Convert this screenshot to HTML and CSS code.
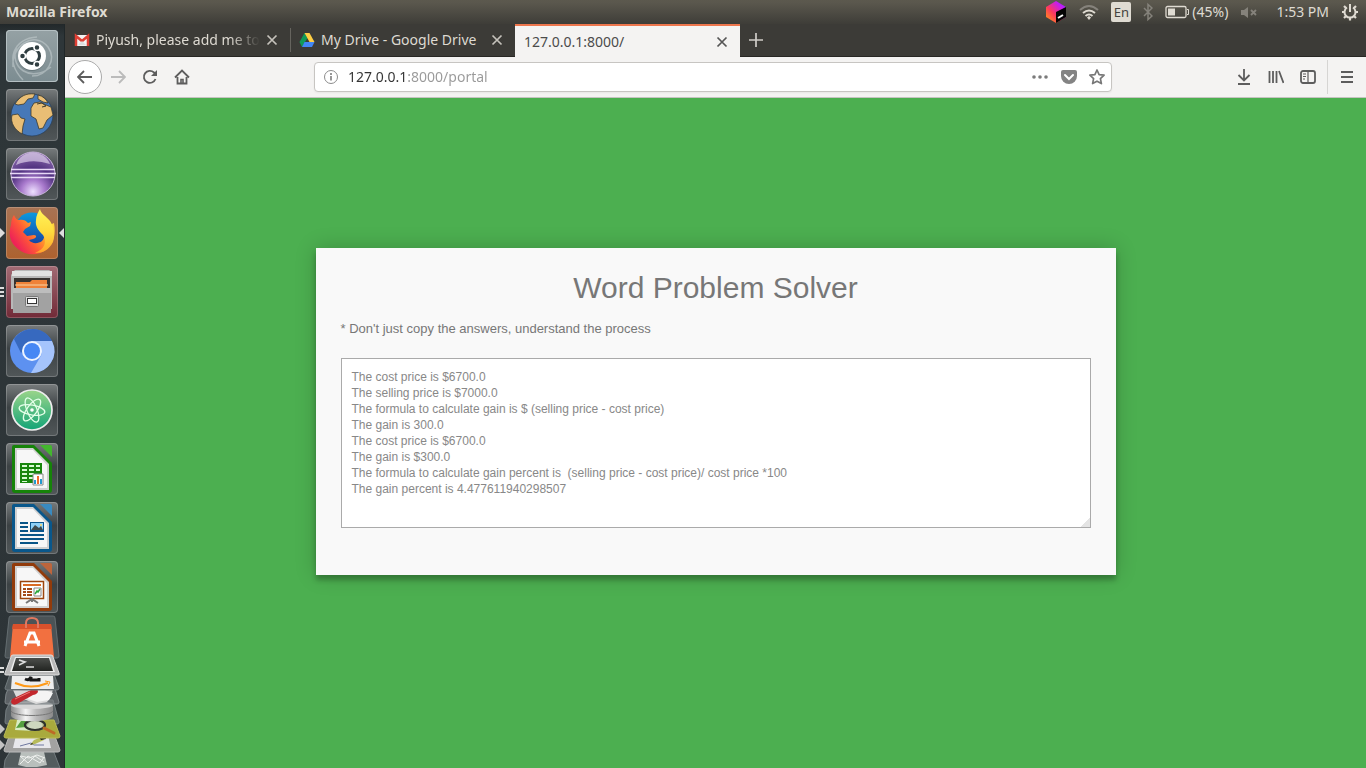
FILE: index.html
```html
<!DOCTYPE html>
<html lang="en">
<head>
<meta charset="utf-8">
<title>127.0.0.1:8000/</title>
<link rel="stylesheet" href="styles.css">
</head>
<body>
<header class="panel">
  <span class="panel-title">Mozilla Firefox</span>
  <div class="indicators">
    <svg width="22" height="24" viewBox="0 0 22 24"><defs><linearGradient id="cube" x1="0" y1="1" x2="1" y2="0"><stop offset=".1" stop-color="#ff8a20"/><stop offset=".4" stop-color="#fd3a5c"/><stop offset=".75" stop-color="#c41cf5"/><stop offset="1" stop-color="#7b30ff"/></linearGradient></defs><path d="M11 1 1 7v10l10 6 10-6V7z" fill="url(#cube)"/><path d="m11 12 10-5v10l-10 6z" fill="#050505"/><path d="m13 18 5-3" stroke="#fff" stroke-width="2"/></svg>
    <svg width="20" height="24" viewBox="0 0 20 24" fill="none" stroke-width="2"><path d="M1 10q9-8 18 0" stroke="#85827b"/><path d="M4 13q6-5 12 0M6.500 16q3.500-3 7 0" stroke="#dfdbd2"/><path d="m10 16-2 1.500 2 2.500 2-2.500z" fill="#dfdbd2"/></svg>
    <span class="lang">En</span>
    <svg width="10" height="24" viewBox="0 0 10 24" fill="none" stroke="#85827b" stroke-width="1.500"><path d="m1 8 8 8-4 3.500v-15L9 8l-8 8"/></svg>
    <span class="battery"><svg width="25" height="24" viewBox="0 0 25 24"><rect x="1" y="6.500" width="20" height="11" rx="1.500" fill="none" stroke="#dfdbd2" stroke-width="1.300"/><path d="M3 8.500h7v7H3z" fill="#dfdbd2"/><path d="M22 9.500h1.500v5H22" fill="none" stroke="#dfdbd2"/></svg>(45%)</span>
    <svg width="18" height="24" viewBox="0 0 18 24"><path d="M1 10h3l4-3v11l-4-3H1z" fill="#85827b"/><path d="m11 10 5 5m0-5-5 5" stroke="#85827b" stroke-width="1.800"/></svg>
    <time class="clock">1:53 PM</time>
    <svg width="18" height="24" viewBox="0 0 18 24" fill="none" stroke="#dfdbd2"><path d="M6 7.500a5.500 5.500 0 1 0 6 0M9 4v8" stroke-width="2"/><path d="m5 8-2-2M13 8l2-2M3.500 12H1m13.500 0H17M5 16l-2 2M13 16l2 2M9 18v2.500" stroke-width="2.200"/></svg>
  </div>
</header>
<div class="desktop">
<nav class="launcher" aria-label="Launcher">
  <button class="tile dash" aria-label="Dash"><svg viewBox="0 0 52 52"><g fill="none" stroke="#c6d0d2" opacity=".55" stroke-width="1.500"><path d="M7 37C5 16 28 0 42 17c9 13-1 29-16 29M17 50C-2 30 8 8 31 7M45 37C25 53 2 38 11 16"/></g><circle cx="26" cy="27" r="14" fill="#58676b" opacity=".6"/><circle cx="26" cy="26" r="14" fill="#fff"/><circle cx="26" cy="26" r="7.500" fill="none" stroke="#2f3d40" stroke-width="3"/><g stroke="#fff" stroke-width="1.500" fill="#2f3d40"><circle cx="16.500" cy="26" r="3"/><circle cx="31" cy="17.500" r="3"/><circle cx="31" cy="34.500" r="3"/></g></svg></button>
  <button class="tile" aria-label="Web map"><svg viewBox="0 0 52 52"><circle cx="26" cy="26" r="21" fill="#4678b8" stroke="#263d58" stroke-width=".7"/><g fill="#e9be75" stroke="#3c3a2d" stroke-width=".8"><path d="M9 15C14 7 20 4 29 5l-2 4-5 1-4 5-6 1zM6 26l6-1 3 4 4 1-2 7-1 8C9 41 4 34 6 26zM25 19l3-5 6-1 6 3 5 2 2 8-6 5-4 8-4 1-3-10-5-3zM32 6c5 1 8 4 10 8l-5-1-5-3z"/></g><path d="m31 15 5-1 4 3-4 1" fill="none" stroke="#3c3a2d"/></svg></button>
  <button class="tile" aria-label="Eclipse"><svg viewBox="0 0 52 52"><defs><radialGradient id="ecl" cy=".9" r=".9"><stop stop-color="#eee0ff"/><stop offset=".3" stop-color="#a879cc"/><stop offset=".6" stop-color="#513280"/><stop offset="1" stop-color="#8d6cae"/></radialGradient></defs><circle cx="27" cy="26" r="22" fill="url(#ecl)" stroke="#c8b5da"/><path d="M10 17a18 18 0 0 1 34-1q-18-6-34 1" fill="#eee5f7" opacity=".6"/><path d="M5 21.500h44M4 25.500h46M5 29.500h44" stroke="#e8d9f6" stroke-width="1.500"/></svg></button>
  <button class="tile firefox running focused" aria-label="Firefox"><svg viewBox="0 0 52 52"><defs><linearGradient id="fox" x1=".9" y1=".2" x2=".1" y2=".7"><stop stop-color="#ffd33c"/><stop offset=".35" stop-color="#ffa02a"/><stop offset=".65" stop-color="#ff5a36"/><stop offset="1" stop-color="#ee2357"/></linearGradient><linearGradient id="flame" x2="0" y2="1"><stop stop-color="#fff45a"/><stop offset=".5" stop-color="#ffdc3e"/><stop offset="1" stop-color="#ffa32b"/></linearGradient><linearGradient id="globe" x2="0" y2="1"><stop stop-color="#0b9ae0"/><stop offset="1" stop-color="#183b9b"/></linearGradient></defs><circle cx="26" cy="23" r="17.500" fill="url(#globe)"/><path d="M8 8c1 3 3 5 5 5 3-1 7 0 9 3l3-1-1 4-5 3-2 3 4 4 7-1c3 0 3 3-1 4l-4 1c3 4 9 4 13 1 4-4 2-9 1-13l11-5c2 11 0 20-7 26-8 7-21 7-29 0C4 36 2 27 5 18c0-4 1-7 3-10z" fill="url(#fox)"/><path d="M34 2c1 5 6 7 10 12 4 6 5 14 3 21-4 8-10 11-18 11 10-4 12-11 8-18-5-5-8-9-7-15 0-4 2-8 4-11z" fill="url(#flame)"/></svg></button>
  <button class="tile files running many" aria-label="Files"><svg viewBox="0 0 52 52"><path d="m7 6 2-2h34l3 2v37H5V9z" fill="#b8b8b8"/><path d="M6 5h40v5H6z" fill="#e2e2e2"/><path d="M8 12h36v10H8z" fill="#383330"/><path d="M10 16h14l2-2h15v8H10z" fill="#ef8239"/><path d="M9 19h33" stroke="#f8d4a5"/><path d="M7 22h38v25H7z" fill="#a2a2a2"/><path d="M7 22h38v5H7z" fill="#bdbdbd"/><rect x="19.500" y="30.500" width="13" height="10" rx="1" fill="#ddd" stroke="#777"/><rect x="21.500" y="32.500" width="9" height="5" fill="#fff" stroke="#333"/></svg></button>
  <button class="tile" aria-label="Chromium"><svg viewBox="0 0 52 52"><circle cx="26" cy="26" r="22" fill="#5d91f0"/><path d="M8 14A22 22 0 0 1 46 16H26L15 28z" fill="#3769bf"/><path d="M46 16a22 22 0 0 1-21 32l11-19-10-13z" fill="#a5c4fc"/><circle cx="26" cy="26" r="10" fill="#eef4ff"/><circle cx="26" cy="26" r="8" fill="#4687f4"/></svg></button>
  <button class="tile" aria-label="Atom"><svg viewBox="0 0 52 52"><defs><linearGradient id="atom" x2="0" y2="1"><stop stop-color="#9bd58a"/><stop offset="1" stop-color="#13a477"/></linearGradient></defs><circle cx="26" cy="26" r="20" fill="url(#atom)" stroke="#eee" stroke-width="1.700"/><g fill="none" stroke="#e4ffe9" stroke-width="1.300"><ellipse cx="26" cy="26" rx="13" ry="5" transform="rotate(10 26 26)"/><ellipse cx="26" cy="26" rx="13" ry="5" transform="rotate(67 26 26)"/><ellipse cx="26" cy="26" rx="13" ry="5" transform="rotate(126 26 26)"/></g><circle cx="26" cy="26" r="1.800" fill="#fff"/></svg></button>
  <button class="tile" aria-label="LibreOffice Calc"><svg viewBox="0 0 52 52"><path d="M8 2h20l18 18v27q0 3-3 3H9q-3 0-3-3V4q0-2 2-2z" fill="#168309"/><path d="M34 2h10q2 0 2 2v10z" fill="#43b62e"/><path d="M9 5h18l16 16v26H9z" fill="#d1d1d1"/><path d="M11 7h16l14 15v23H11z" fill="#f7f7f7"/><path d="M14 20h22v20H14z" fill="#18860d"/><path d="M16 22h5v2h-5zm7 0h5v2h-5zm7 0h4v2h-4zM16 26h5v2h-5zm7 0h5v2h-5zm7 0h4v2h-4zM16 30h5v2h-5zm7 0h5v2h-5zm-7 4h5v2h-5zm7 0h5v2h-5zM16 38h5v1h-5z" fill="#d8fbd3"/><path d="M27 31h10v11H27z" fill="#fff" stroke="#888"/><path d="M28 37h2v4h-2zm6-1h2v5h-2z" fill="#2499cf"/><path d="M31 33h2v8h-2z" fill="#f16a2b"/></svg></button>
  <button class="tile" aria-label="LibreOffice Writer"><svg viewBox="0 0 52 52"><path d="M8 2h20l18 18v27q0 3-3 3H9q-3 0-3-3V4q0-2 2-2z" fill="#09578b"/><path d="M34 2h10q2 0 2 2v10z" fill="#398ac0"/><path d="M9 5h18l16 16v26H9z" fill="#d1d1d1"/><path d="M11 7h16l14 15v23H11z" fill="#f7f7f7"/><path d="M14 21h8m-8 4h8m-8 4h8m-8 4h24m-24 4h24m-24 4h18" stroke="#095587" stroke-width="2"/><path d="M24 20h14v10H24z" fill="#0b568c"/><path d="M25 21h12v7H25z" fill="#8ed0f7"/><path d="m25 28 4-5 4 3 2-2 2 4z" fill="#3f4a4d"/><circle cx="35" cy="23" r="1" fill="#ffdb65"/></svg></button>
  <button class="tile" aria-label="LibreOffice Impress"><svg viewBox="0 0 52 52"><path d="M8 2h20l18 18v27q0 3-3 3H9q-3 0-3-3V4q0-2 2-2z" fill="#923b0b"/><path d="M34 2h10q2 0 2 2v10z" fill="#bd653c"/><path d="M9 5h18l16 16v26H9z" fill="#d1d1d1"/><path d="M11 7h16l14 15v23H11z" fill="#f7f7f7"/><path d="M14.500 20.500h23v17h-23z" fill="#fff" stroke="#9b450e" stroke-width="1.500"/><path d="M17 24h18" stroke="#da6b24" stroke-width="2"/><path d="M17 28h3m-3 3h3m-3 3h3m1-6h5m-5 3h5m-5 3h5" stroke="#a44b19" stroke-width="2"/><path d="M28 27h7v8h-7z" fill="#fff" stroke="#888"/><path d="m29 33 2-3 1 1 2-3" fill="none" stroke="#29a73b" stroke-width="1.500"/><path d="m20 42 6-4 6 4m-6-4v3" fill="none" stroke="#777" stroke-width="2"/></svg></button>
  <button class="folded" aria-label="More applications"><svg width="65" height="154" viewBox="0 0 65 154">
    <defs>
      <linearGradient id="disk"><stop stop-color="#888"/><stop offset=".35" stop-color="#f4f4f4"/><stop offset=".6" stop-color="#bbb"/><stop offset="1" stop-color="#8a8a8a"/></linearGradient>
      <linearGradient id="screen" x2="0" y2="1"><stop stop-color="#4c4e4b"/><stop offset="1" stop-color="#222421"/></linearGradient>
    </defs>
    <path d="M11 2h42q2 0 2 2l4 38q0 2-2 2H7q-2 0-2-2L9 4q0-2 2-2z" fill="#4b5356" stroke="#646d70"/>
    <path d="M13 10h38l3 33H10z" fill="#f27040"/><path d="M13 10h38l1 5H12z" fill="#d9512c"/><path d="M26 14V9q0-5 6-5t6 5v5" fill="none" stroke="#e07860" stroke-width="2"/><path d="m25 32 5-13h4l5 13m-15-4h16" fill="none" stroke="#fff" stroke-width="3"/>
    <path d="m5 146 6-10h42l7 18H4z" fill="#545c5e" stroke="#727b7e"/><path d="m18 151 3-13h23l3 13-10 2H26z" fill="#b9bfbc"/><path d="m20 142 8 7 7-7 9 6m-24 2 8-8 12 7 4-6m-23-1 8 2 8-3 8 3" fill="none" stroke="#eef0ee"/>
    <path d="M10 120h44l6 16q0 2-2 2H6q-2 0-2-2z" fill="#a2a2a1" stroke="#bbb"/><path d="m16 121-3 13h38l-3-13z" fill="#e8e8ec"/><path d="m20 132 11-3 3 2h10" fill="none" stroke="#6f78a0"/><path d="m30 131 4-5 8-3 2 3-9 4z" fill="#b7bb5a"/><path d="m39 123 6-2 1 4-5 1z" fill="#202020"/><path d="m30 131 2-2 1 1z" fill="#111"/>
    <path d="m6 96 5-10h42l6 22q0 2-2 2H7q-2 0-2-2z" fill="#5a6265" stroke="#747d80"/>
    <path d="M10 106h44l6 16q0 2-2 2H6q-2 0-2-2z" fill="#a9aa3d" stroke="#babb55"/><path d="m17 106-2 10 20 1 8-2-2-9z" fill="#d9edc4"/><path d="m16 114 5-7h10l-5 6z" fill="#55a040"/><ellipse cx="35" cy="111" rx="10" ry="5" fill="#c9cfbe" fill-opacity=".7" stroke="#2f322d" stroke-width="2.200"/><path d="m44 114 10 5" stroke="#bd6a26" stroke-width="3" stroke-linecap="round"/>
    <path d="M11 91v11c3 7 39 7 42 0V91z" fill="url(#disk)"/><ellipse cx="32" cy="91" rx="21" ry="4" fill="#d6d6d6"/><path d="M11 97c3 6 39 6 42 0" fill="none" stroke="#777"/>
    <path d="m6 80 5-12h42l6 20q0 2-2 2H7q-2 0-2-2z" fill="#7b8183" fill-opacity=".6" stroke="#7e8588"/><path d="m13 76 40-1-2 8-4 5-11 2-10-4-8 1z" fill="#dadada"/><path d="m29 78 6-3 10 1 8 3-4 7-12 2-9-3z" fill="#f4f4f4"/><path d="M12 85 31 76q7-2 7 1t-5 4L17 90q-5 2-6-2z" fill="#c3282d"/><path d="m15 85 15-7" stroke="#ec7772"/>
    <path d="M10 60h44l5 14q0 2-2 2H7q-2 0-2-2z" fill="#555d60" stroke="#727b7e"/><path d="M12 62h41l1 13H11z" fill="#ededed"/><path d="M25 65q4 2 6-2v3h8v-2" fill="none" stroke="#191919" stroke-width="3"/><path d="M15 69q16 7 33 0" fill="none" stroke="#ff9a18" stroke-width="2"/><path d="m45 67 5 1-2 4" fill="none" stroke="#ff9a18"/>
    <path d="M13 41h38q2 0 2 2l6 16q1 2-1 2H6q-2 0-1-2l6-16q0-2 2-2z" fill="#b9b9b9" stroke="#ddd"/><path d="M15 43h35l5 15H10z" fill="#eee"/><path d="M16 44h33l4 13H12z" fill="url(#screen)"/><path d="m19 46 6 2-6 3m7 2h8" fill="none" stroke="#ddd" stroke-width="1.600"/>
    <path d="M0 54h4M0 58h4" stroke="#ddd" stroke-width="2"/><path d="m0 126 5 5-5 5zM0 110l5 5-5 5z" fill="#c3c3c3"/>
  </svg></button>
</nav>
<main class="browser">
  <div class="tabs" role="tablist">
    <div class="tab" role="tab"><svg class="favicon" viewBox="0 0 16 16"><path d="M1 3h14v11H1z" fill="#f2f2f2"/><path d="M2 14V4l6 5 6-5v10" fill="none" stroke="#df3f34" stroke-width="2.500"/><path d="m4 13 4-4 4 4z" fill="#ddd"/></svg><span class="tab-label">Piyush, please add me to</span><button class="close" aria-label="Close Gmail tab"><svg viewBox="0 0 12 12"><path d="m1.500 1.500 9 9m0-9-9 9"/></svg></button></div>
    <div class="tab divided" role="tab"><svg class="favicon" viewBox="0 0 16 16"><path d="m5.500 1-5 9L3 15l5.500-9z" fill="#119a58"/><path d="M5.500 1h5l5 9h-5z" fill="#ffce43"/><path d="M5.500 10h10L13 15H3z" fill="#4286f5"/></svg><span class="tab-label">My Drive - Google Drive</span><button class="close" aria-label="Close Drive tab"><svg viewBox="0 0 12 12"><path d="m1.500 1.500 9 9m0-9-9 9"/></svg></button></div>
    <div class="tab selected" role="tab" aria-selected="true"><span class="tab-label">127.0.0.1:8000/</span><button class="close" aria-label="Close current tab"><svg viewBox="0 0 12 12"><path d="m1.500 1.500 9 9m0-9-9 9"/></svg></button></div>
    <button class="new-tab" aria-label="New tab"><svg width="16" height="16" viewBox="0 0 16 16"><path d="M8 1v14M1 8h14" stroke="#cfcdc8" stroke-width="1.700"/></svg></button>
  </div>
  <div class="toolbar">
    <button class="tool back" aria-label="Back"><svg viewBox="0 0 16 16"><path d="M15 8H1m6-6L1 8l6 6"/></svg></button>
    <button class="tool" aria-label="Forward" disabled><svg viewBox="0 0 16 16"><path d="M1 8h14M9 2l6 6-6 6"/></svg></button>
    <button class="tool" aria-label="Reload"><svg viewBox="0 0 16 16"><path d="M13.500 10A6 6 0 1 1 12 3.500L13.500 5"/><path d="M15 1v6H9z" fill="#5d5d5d" stroke="none"/></svg></button>
    <button class="tool" aria-label="Home"><svg viewBox="0 0 16 16"><path d="m1 8.500 7-7 7 7M3.500 8v6.500h9V8"/><path d="M7 14v-3.500h2V14" stroke-width="1.600"/></svg></button>
    <span class="spring"></span>
    <div class="urlbar">
      <svg width="16" height="16" viewBox="0 0 16 16" fill="none" stroke="#8c8c8c"><circle cx="8" cy="8" r="6.500"/><path d="M8 7v4.500M8 4v2" stroke-width="1.800"/></svg>
      <input class="address" type="text" aria-label="Address" value="127.0.0.1:8000/portal">
      <button class="page-action" aria-label="Page actions"><svg width="18" height="16" viewBox="0 0 18 16" fill="#7b7b7b"><circle cx="3" cy="8" r="1.800"/><circle cx="9" cy="8" r="1.800"/><circle cx="15" cy="8" r="1.800"/></svg></button>
      <button class="page-action" aria-label="Save to Pocket"><svg width="16" height="16" viewBox="0 0 16 16"><path d="M2 1h12q2 0 2 2v4a8 8 0 0 1-16 0V3q0-2 2-2z" fill="#838383"/><path d="m4 6 4 4 4-4" fill="none" stroke="#fff" stroke-width="2" stroke-linecap="round"/></svg></button>
      <button class="page-action" aria-label="Bookmark"><svg width="16" height="16" viewBox="0 0 16 16"><path d="m8 1 2.100 4.600 5 .6-3.700 3.400 1 5L8 12.200l-4.400 2.400 1-5L.900 6.200l5-.6z" fill="none" stroke="#777" stroke-width="1.700" stroke-linejoin="round"/></svg></button>
    </div>
    <span class="spring"></span>
    <button class="tool" aria-label="Downloads"><svg viewBox="0 0 16 16"><path d="M8 0v11M2.500 6 8 11.500 13.500 6M2 15h12" stroke-width="1.800"/></svg></button>
    <button class="tool" aria-label="Library"><svg viewBox="0 0 16 16"><path d="M1.500 2v12M5 2v12M8.500 2v12M11 2l4.500 12" stroke-width="1.800"/></svg></button>
    <button class="tool" aria-label="Sidebar"><svg viewBox="0 0 16 16"><rect x="1" y="2" width="14" height="12" rx="2" stroke-width="1.800"/><path d="M8 2v12M3 5h3M3 7.500h3M3 10h2" stroke-width="1.200"/></svg></button>
    <button class="tool menu" aria-label="Menu"><svg viewBox="0 0 16 16"><path d="M2 3h12M2 8h12M2 13h12"/></svg></button>
  </div>
  <section class="page">
    <form class="card">
      <h1 class="card-title">Word Problem Solver</h1>
      <label class="note" for="answer">* Don't just copy the answers, understand the process</label>
      <textarea class="answer" id="answer">The cost price is $6700.0
The selling price is $7000.0
The formula to calculate gain is $ (selling price - cost price)
The gain is 300.0
The cost price is $6700.0
The gain is $300.0
The formula to calculate gain percent is  (selling price - cost price)/ cost price *100
The gain percent is 4.477611940298507</textarea>
    </form>
  </section>
</main>
</div>
</body>
</html>
```
FILE: styles.css
```css
* { box-sizing: border-box; }
body {
  margin: 0;
  min-height: 100vh;
  display: flex;
  flex-direction: column;
  font: 14px/20px "Noto Sans", "Open Sans", sans-serif;
}
button { margin: 0; padding: 0; border: 0; background: none; font: inherit; }
svg { display: block; flex: none; }

.panel {
  display: flex;
  justify-content: space-between;
  align-items: center;
  height: 24px;
  padding: 0 7px 0 6px;
  background: linear-gradient(#5c594e, #5a574d 3px, #3e3d38);
  color: #dfdbd2;
  white-space: nowrap;
}
.panel-title { font-weight: 700; }
.indicators { display: flex; align-items: center; gap: 12px; }
.battery { display: flex; align-items: center; gap: 2px; line-height: 24px; }
.clock { margin-left: 6px; }
.lang {
  width: 20px;
  border-radius: 2px;
  background: #dfdbd2;
  color: #45433f;
  font-size: 13px;
  text-align: center;
}

.desktop { display: flex; flex: 1; }
.launcher {
  display: flex;
  flex-direction: column;
  align-items: center;
  gap: 7px;
  width: 65px;
  padding-top: 6px;
  background: linear-gradient(#22282a, #2e3639 12px, #2d3437);
  border-right: 1px solid #202729;
}
.tile {
  position: relative;
  width: 52px;
  height: 52px;
  border-radius: 4px;
  background: linear-gradient(#777b7c, #3c4244 45%, #515759);
  box-shadow: inset 0 0 0 1px #ffffff33;
}
.tile svg { width: 52px; height: 52px; }
.dash { background: linear-gradient(#95a1a4, #7c8c91); box-shadow: inset 0 0 0 1px #b5c0c3; }
.firefox { background: linear-gradient(#a87354, #ad622f); }
.files { background: linear-gradient(#a26b74, #712a37); }
.running::before, .focused::after {
  content: "";
  position: absolute;
  top: 21px;
  border: 5px solid transparent;
}
.running::before { left: -6px; border-left-color: #ddd; border-right: 0; }
.focused::after { right: -6px; border-right-color: #ddd; border-left: 0; }
.many::before {
  width: 4px;
  height: 10px;
  border: 0;
  background: repeating-linear-gradient(#ddd 0 2px, #2d3437 2px 4px);
}
.folded { margin-top: -6px; }

.browser { display: flex; flex: 1; flex-direction: column; min-width: 0; }
.tabs {
  display: flex;
  height: 33px;
  background: #3c3b37;
  border-bottom: 1px solid #282724;
  color: #dedad2;
}
.tab {
  display: flex;
  align-items: center;
  flex: 0 1 225px;
  min-width: 0;
  gap: 6px;
  padding: 0 12px 0 9px;
}
.divided { background: linear-gradient(#66645e, #66645e) left / 1px 24px no-repeat; }
.selected {
  margin-bottom: -1px;
  border-top: 2px solid #ed764d;
  background: #f4f3f2;
  color: #4b4b4b;
}
.favicon { width: 16px; height: 16px; }
.tab-label {
  flex: 1;
  overflow: hidden;
  white-space: nowrap;
  mask-image: linear-gradient(to left, transparent, #000 30px);
}
.divided .tab-label, .selected .tab-label { mask-image: none; }
.close svg { width: 12px; height: 12px; fill: none; stroke: #c5c2bb; stroke-width: 1.7; }
.selected .close svg { stroke: #555; }
.new-tab { padding: 0 8px; }

.toolbar {
  display: flex;
  align-items: center;
  height: 41px;
  padding: 0 3px;
  background: #f4f3f2;
  border-bottom: 1px solid #c6c4c1;
}
.tool { display: grid; place-items: center; width: 32px; height: 34px; }
.tool svg { width: 16px; height: 16px; fill: none; stroke: #5d5d5d; stroke-width: 1.8; }
.tool:disabled svg { stroke: #bbb; }
.back {
  width: 34px;
  border: 1px solid #aaa;
  border-radius: 50%;
  background: #fff;
}
.menu { width: 39px; margin: 0 -3px 0 3px; border-left: 1px solid #d6d5d3; }
.spring { flex: 0 1 116px; }
.urlbar {
  display: flex;
  flex: 1;
  align-items: center;
  gap: 12px;
  height: 30px;
  padding: 0 6px 0 8px;
  border: 1px solid #c7c5c2;
  border-radius: 4px;
  background: #fff;
  box-shadow: 0 1px 2px #0000000d;
}
.address {
  flex: 1;
  min-width: 0;
  margin-left: -3px;
  padding: 0;
  border: 0;
  outline: 0;
  background: linear-gradient(to right, #333 59px, #999 59px);
  background-clip: text;
  color: transparent;
  font: inherit;
}

.page {
  flex: 1;
  padding: 150px 20px;
  background: #4caf50;
  color: #777;
  font-family: "Liberation Sans", Arial, sans-serif;
}
.card {
  display: flex;
  flex-direction: column;
  max-width: 800px;
  margin: 0 auto;
  padding: 25px 25px 47px;
  background: #f9f9f9;
  box-shadow: 0 0 20px #00000033, 0 5px 5px #0000003d;
}
.card-title { margin: 0 0 16px; font-size: 30px; font-weight: 400; line-height: 30px; text-align: center; }
.note { margin-bottom: 19px; font-size: 13px; line-height: 20px; }
.answer {
  width: 100%;
  height: 170px;
  padding: 10px;
  border: 1px solid #aaa;
  background: #fff;
  color: #888;
  font: 12px/16px "Liberation Sans", Arial, sans-serif;
  resize: vertical;
}
.answer::-webkit-resizer {
  background: linear-gradient(135deg, transparent 70%, #e4e4e4 70%);
}
```
